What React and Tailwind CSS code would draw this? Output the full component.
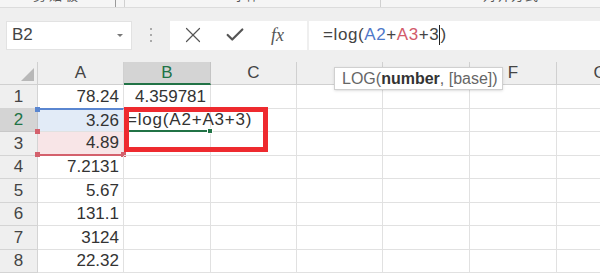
import React from 'react';
import { X, Check } from 'lucide-react';

const font = { fontFamily: '"Liberation Sans", "Noto Sans CJK SC", sans-serif' };

// D and E headers sit under the function tooltip, so their letters are not drawn
const cols = [
  { key: 'A', w: 'w-[86px]', label: 'A' },
  { key: 'B', w: 'w-[87px]', label: 'B' },
  { key: 'C', w: 'w-[86px]', label: 'C' },
  { key: 'D', w: 'w-[86px]', label: '' },
  { key: 'E', w: 'w-[87px]', label: '' },
  { key: 'F', w: 'w-[87px]', label: 'F' },
  { key: 'G', w: 'w-[87px]', label: 'G' },
];

const values = ['78.24', '3.26', '4.89', '7.2131', '5.67', '131.1', '3124', '22.32'];

const Ribbon = () => (
  <div className="h-[8px] bg-[#f5f5f5] border-b border-[#dcdcdc] flex items-end overflow-hidden text-[13px] text-[#555]">
    <span className="ml-[33px] h-[19px] leading-[15px] tracking-[3px] shrink-0">剪贴板</span>
    <span className="ml-[34px] h-[8px] w-px bg-[#9a9a9a] shrink-0 self-start"></span>
    <span className="ml-[8px] h-[8px] w-px bg-[#d0d0d0] shrink-0"></span>
    <span className="ml-[108px] h-[19px] leading-[15px] shrink-0">字体</span>
    <span className="ml-[121px] h-[8px] w-px bg-[#d0d0d0] shrink-0"></span>
    <span className="ml-[102px] h-[19px] leading-[15px] tracking-[1px] shrink-0">对齐方式</span>
  </div>
);

const FormulaBar = () => (
  <div className="h-[54px] bg-[#efefef] flex items-center">
    <div className="ml-[6px] w-[126px] h-[29px] bg-white border border-[#e2e2e2] flex items-center justify-between pl-[5px] pr-[8px]">
      <span className="text-[17px] text-[#444]">B2</span>
      <span className="w-0 h-0 border-l-[3px] border-r-[3px] border-t-[3px] border-l-transparent border-r-transparent border-t-[#777]"></span>
    </div>
    <div className="w-[38px] flex flex-col items-center gap-[4px]">
      <span className="w-[2px] h-[2px] bg-[#aaa]"></span>
      <span className="w-[2px] h-[2px] bg-[#aaa]"></span>
      <span className="w-[2px] h-[2px] bg-[#aaa]"></span>
    </div>
    <div className="w-[137px] h-[29px] bg-white flex items-center">
      <X className="ml-[10px] text-[#555]" size={26} strokeWidth={1.1} />
      <Check className="ml-[18px] text-[#555]" size={22} strokeWidth={2.4} />
      <span className="ml-[25px] text-[18px] italic text-[#555]" style={{ fontFamily: '"Liberation Serif", serif' }}>
        fx
      </span>
    </div>
    <div className="ml-[2px] flex-1 h-[29px] bg-white flex items-center pl-[14px] text-[17px] tracking-[0.6px] text-[#444]">
      <span>=log(</span>
      <span className="text-[#4f78c9]">A2</span>
      <span>+</span>
      <span className="text-[#d25a6a]">A3</span>
      <span>+3</span>
      <span className="w-px h-[20px] bg-[#222]"></span>
      <span>)</span>
    </div>
  </div>
);

const HeaderRow = () => (
  <div className="flex h-[23px] bg-[#efefef]">
    <div className="w-[38px] shrink-0 border-r border-b border-[#d0d0d0] flex items-end justify-end pr-[3px] pb-[3px]">
      <span className="w-0 h-0 border-b-[13px] border-l-[13px] border-b-[#b8b8b8] border-l-transparent"></span>
    </div>
    {cols.map((c) => (
      <div
        key={c.key}
        className={`${c.w} shrink-0 flex items-center justify-center text-[17px] border-r ${
          c.key === 'B'
            ? 'bg-[#d4d4d4] text-[#217346] border-b-2 border-b-[#217346] border-r-[#c4c4c4]'
            : 'text-[#444] border-b border-[#d0d0d0]'
        }`}
      >
        {c.label}
      </div>
    ))}
  </div>
);

const Row = ({ n, value }) => {
  const active = n === 2;
  return (
    <div className="flex h-[23.5px]">
      <div
        className={`w-[38px] shrink-0 flex items-center justify-center text-[17px] border-r border-b ${
          active ? 'bg-[#d4d4d4] text-[#217346] border-r-[#c4c4c4] border-b-[#c8c8c8]' : 'bg-[#efefef] text-[#444] border-[#d4d4d4]'
        }`}
      >
        {n}
      </div>
      {cols.map((c) => {
        let cls = 'border-r border-b border-[#e1e1e1]';
        let content = null;
        if (c.key === 'A') {
          if (n === 2) cls = 'bg-[#e2ebf7] border-r border-b border-[#e1e1e1] border-t-2 border-t-[#5a86d0] -mt-[1px]';
          if (n === 3) cls = 'bg-[#f8e5e7] border-r border-b-2 border-r-[#e1e1e1] border-b-[#d4606c]';
          content = <span className="ml-auto pr-[4px]">{value}</span>;
        }
        if (c.key === 'B' && n === 1) content = <span className="ml-auto pr-[4px]">4.359781</span>;
        if (c.key === 'B' && n === 2) {
          cls = 'border-r border-r-[#e1e1e1] border-b-2 border-b-[#217346] relative z-10';
          content = (
            <>
              <span className="pl-[3px] whitespace-nowrap tracking-[0.8px]">=log(A2+A3+3)</span>
              <span className="absolute -right-[3px] -bottom-[4px] w-[6px] h-[6px] bg-[#217346] border border-white"></span>
            </>
          );
        }
        return (
          <div key={c.key} className={`${c.w} shrink-0 flex items-center text-[17px] text-[#333] relative ${cls}`}>
            {content}
            {c.key === 'A' && n === 2 && (
              <span className="absolute -left-[3px] -top-[3px] w-[5px] h-[5px] bg-[#5a86d0]"></span>
            )}
            {c.key === 'A' && n === 3 && (
              <>
                <span className="absolute -left-[3px] -top-[3px] w-[5px] h-[5px] bg-[#d4606c]"></span>
                <span className="absolute -left-[3px] -bottom-[3px] w-[5px] h-[5px] bg-[#d4606c]"></span>
                <span className="absolute -right-[3px] -bottom-[3px] w-[5px] h-[5px] bg-[#d4606c]"></span>
              </>
            )}
          </div>
        );
      })}
    </div>
  );
};

export default function App() {
  return (
    <div className="w-[600px] h-[276px] overflow-hidden bg-white relative" style={font}>
      <Ribbon />
      <FormulaBar />
      <HeaderRow />
      {values.map((v, i) => (
        <Row key={i} n={i + 1} value={v} />
      ))}

      {/* function tooltip */}
      <div className="absolute left-[334px] top-[67px] w-[169px] h-[23px] bg-white border border-[#d0d0d0] shadow-sm flex items-center pl-[7px] text-[16px] text-[#666] z-20">
        LOG(<b className="text-[#333]">number</b>, [base])
      </div>

      {/* red annotation box */}
      <div className="absolute left-[124px] top-[107px] w-[144px] h-[45px] border-[5px] border-[#ee2a2f] z-20"></div>
    </div>
  );
}
